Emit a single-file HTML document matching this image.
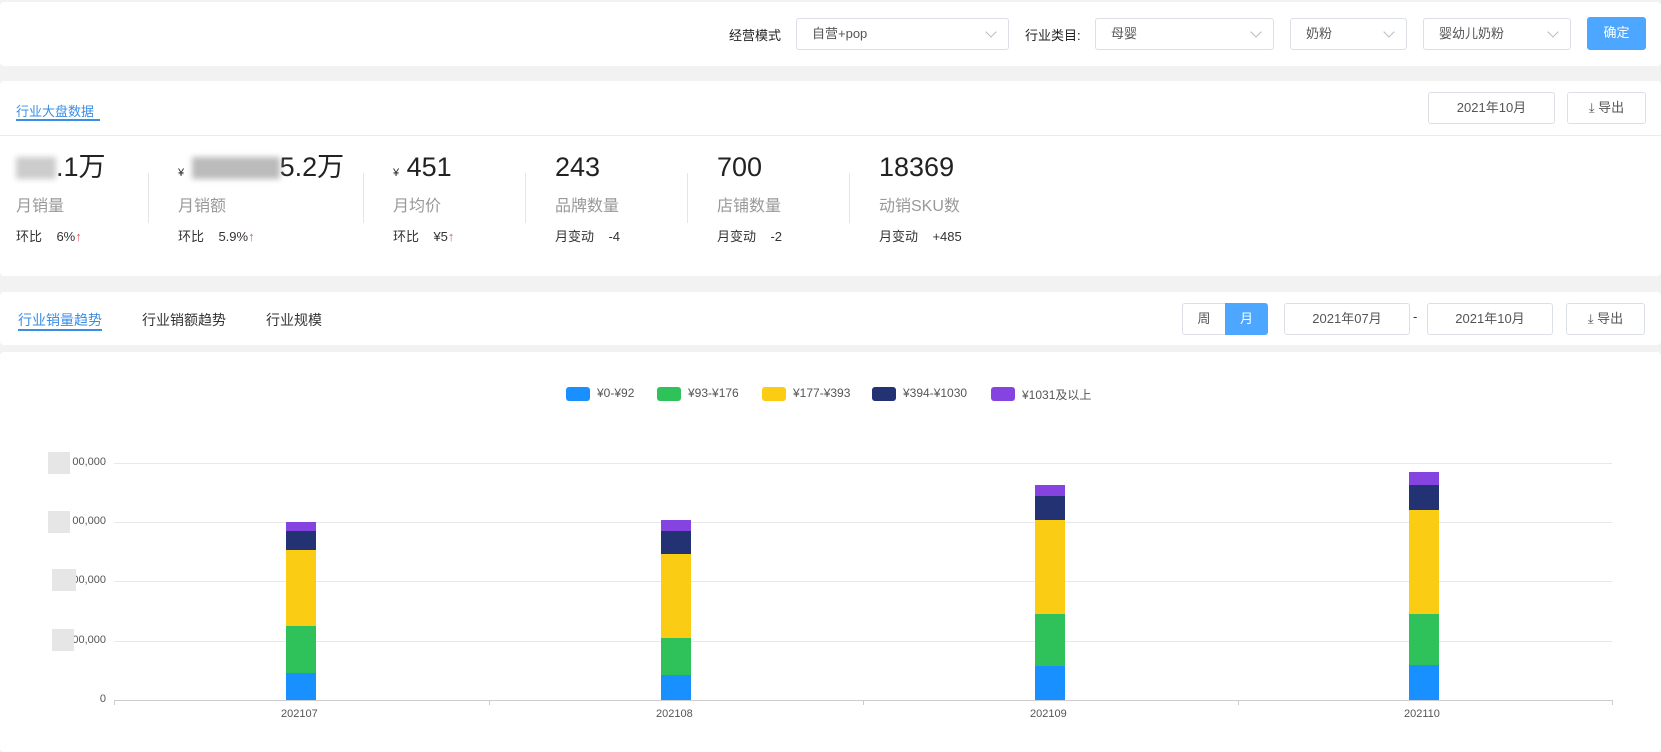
<!DOCTYPE html>
<html><head><meta charset="utf-8"><style>
*{margin:0;padding:0;box-sizing:border-box}
body{width:1661px;height:744px;background:#f2f2f2;font-family:"Liberation Sans","Noto Sans CJK SC",sans-serif;position:relative;overflow:hidden;color:#333}
.card{position:absolute;left:0;width:1661px;background:#fff;border-radius:4px}
.a{position:absolute;white-space:nowrap}
.sel{position:absolute;height:32px;border:1px solid #dcdfe6;border-radius:3px;font-size:13px;color:#555;line-height:30px;padding-left:15px;background:#fff}
.sel:after{content:"";position:absolute;right:13px;top:9px;width:7px;height:7px;border-right:1px solid #bbb;border-bottom:1px solid #bbb;transform:rotate(45deg)}
.btn{position:absolute;height:32px;border:1px solid #dcdfe6;border-radius:3px;font-size:13px;color:#555;line-height:30px;text-align:center;background:#fff}
.big{font-size:27px;color:#222;top:151px;line-height:32px}
.lab{font-size:16px;color:#999;top:192px}
.sub{font-size:13px;color:#333;top:226px}
.up{color:#e55}
.vd{position:absolute;width:1px;height:50px;background:#e5e5e5;top:173px}
.tab{font-size:14px;color:#333;top:310px}
.grid{position:absolute;left:114px;width:1498px;height:1px;background:#e8e8e8}
.yl{position:absolute;right:1555px;font-size:11px;color:#555}
.bar{position:absolute;width:30px}
.leg{position:absolute;top:387px;width:24px;height:14px;border-radius:3px}
.lt{position:absolute;top:386px;font-size:12px;color:#555}
.blur{display:inline-block;height:22px;background:#ccc;filter:blur(3px);vertical-align:-3px}
</style></head><body>
<div class="card" style="top:2px;height:64px"></div>
<div class="a" style="left:729px;top:25px;font-size:13px;color:#222">经营模式</div>
<div class="sel" style="left:796px;top:18px;width:213px">自营+pop</div>
<div class="a" style="left:1025px;top:25px;font-size:13px;color:#222">行业类目:</div>
<div class="sel" style="left:1095px;top:18px;width:179px">母婴</div>
<div class="sel" style="left:1290px;top:18px;width:117px">奶粉</div>
<div class="sel" style="left:1423px;top:18px;width:148px">婴幼儿奶粉</div>
<div class="btn" style="left:1587px;top:17px;width:59px;height:33px;background:#4da6ff;border-color:#4da6ff;color:#fff">确定</div>

<div class="card" style="top:81px;height:195px"></div>
<div class="a" style="left:16px;top:101px;font-size:13px;color:#3a8ee6">行业大盘数据</div>
<div class="a" style="left:16px;top:119px;width:84px;height:2px;background:#3a8ee6"></div>
<div class="a" style="left:0;top:135px;width:1661px;height:1px;background:#ebebeb"></div>
<div class="btn" style="left:1428px;top:92px;width:127px">2021年10月</div>
<div class="btn" style="left:1567px;top:92px;width:79px">⤓ 导出</div>

<div class="a big" style="left:16px"><span class="blur" style="width:40px"></span>.1万</div>
<div class="a big" style="left:178px"><span style="font-size:11px">¥</span> <span class="blur" style="width:88px;background:#bbb"></span>5.2万</div>
<div class="a big" style="left:393px"><span style="font-size:11px">¥</span> 451</div>
<div class="a big" style="left:555px">243</div>
<div class="a big" style="left:717px">700</div>
<div class="a big" style="left:879px">18369</div>
<div class="a lab" style="left:16px">月销量</div>
<div class="a lab" style="left:178px">月销额</div>
<div class="a lab" style="left:393px">月均价</div>
<div class="a lab" style="left:555px">品牌数量</div>
<div class="a lab" style="left:717px">店铺数量</div>
<div class="a lab" style="left:879px">动销SKU数</div>
<div class="a sub" style="left:16px">环比 &nbsp;&nbsp;&nbsp;6%<span class="up">↑</span></div>
<div class="a sub" style="left:178px">环比 &nbsp;&nbsp;&nbsp;5.9%<span class="up">↑</span></div>
<div class="a sub" style="left:393px">环比 &nbsp;&nbsp;&nbsp;¥5<span class="up">↑</span></div>
<div class="a sub" style="left:555px">月变动 &nbsp;&nbsp;&nbsp;-4</div>
<div class="a sub" style="left:717px">月变动 &nbsp;&nbsp;&nbsp;-2</div>
<div class="a sub" style="left:879px">月变动 &nbsp;&nbsp;&nbsp;+485</div>
<div class="vd" style="left:148px"></div><div class="vd" style="left:363px"></div><div class="vd" style="left:525px"></div><div class="vd" style="left:687px"></div><div class="vd" style="left:849px"></div>

<div class="card" style="top:292px;height:53px"></div>
<div class="a tab" style="left:18px;color:#3a8ee6">行业销量趋势</div>
<div class="a" style="left:18px;top:329px;width:84px;height:2px;background:#3a8ee6"></div>
<div class="a tab" style="left:142px">行业销额趋势</div>
<div class="a tab" style="left:266px">行业规模</div>
<div class="btn" style="left:1182px;top:303px;width:44px;border-radius:3px 0 0 3px">周</div>
<div class="btn" style="left:1225px;top:303px;width:43px;background:#4da6ff;border-color:#4da6ff;color:#fff;border-radius:0 3px 3px 0">月</div>
<div class="btn" style="left:1284px;top:303px;width:126px">2021年07月</div>
<div class="a" style="left:1413px;top:309px;font-size:13px">-</div>
<div class="btn" style="left:1427px;top:303px;width:126px">2021年10月</div>
<div class="btn" style="left:1566px;top:303px;width:79px">⤓ 导出</div>

<div class="card" style="top:352px;height:400px"></div>
<div class="leg" style="left:566px;background:#1890ff"></div><div class="lt" style="left:597px">¥0-¥92</div>
<div class="leg" style="left:657px;background:#2fc25b"></div><div class="lt" style="left:688px">¥93-¥176</div>
<div class="leg" style="left:762px;background:#facc14"></div><div class="lt" style="left:793px">¥177-¥393</div>
<div class="leg" style="left:872px;background:#223273"></div><div class="lt" style="left:903px">¥394-¥1030</div>
<div class="leg" style="left:991px;background:#8543e0"></div><div class="lt" style="left:1022px">¥1031及以上</div>

<div class="grid" style="top:463px"></div><div class="grid" style="top:522px"></div><div class="grid" style="top:581px"></div><div class="grid" style="top:641px"></div>
<div class="grid" style="top:700px;background:#ccc"></div>
<div class="a" style="left:114px;top:700px;width:1px;height:5px;background:#ccc"></div>
<div class="a" style="left:489px;top:700px;width:1px;height:5px;background:#ccc"></div>
<div class="a" style="left:863px;top:700px;width:1px;height:5px;background:#ccc"></div>
<div class="a" style="left:1238px;top:700px;width:1px;height:5px;background:#ccc"></div>
<div class="a" style="left:1612px;top:700px;width:1px;height:5px;background:#ccc"></div>
<div class="yl" style="top:456px">00,000</div><div class="yl" style="top:515px">00,000</div><div class="yl" style="top:574px">00,000</div><div class="yl" style="top:634px">00,000</div><div class="yl" style="top:693px">0</div>
<div class="a" style="left:48px;top:452px;width:22px;height:22px;background:#e6e6e6"></div>
<div class="a" style="left:48px;top:511px;width:22px;height:22px;background:#e6e6e6"></div>
<div class="a" style="left:52px;top:569px;width:24px;height:22px;background:#e6e6e6"></div>
<div class="a" style="left:52px;top:629px;width:22px;height:22px;background:#e6e6e6"></div>

<div class="bar" style="left:286px;top:522px;height:9px;background:#8543e0"></div>
<div class="bar" style="left:286px;top:531px;height:19px;background:#223273"></div>
<div class="bar" style="left:286px;top:550px;height:76px;background:#facc14"></div>
<div class="bar" style="left:286px;top:626px;height:47px;background:#2fc25b"></div>
<div class="bar" style="left:286px;top:673px;height:27px;background:#1890ff"></div>

<div class="bar" style="left:661px;top:520px;height:11px;background:#8543e0"></div>
<div class="bar" style="left:661px;top:531px;height:23px;background:#223273"></div>
<div class="bar" style="left:661px;top:554px;height:84px;background:#facc14"></div>
<div class="bar" style="left:661px;top:638px;height:37px;background:#2fc25b"></div>
<div class="bar" style="left:661px;top:675px;height:25px;background:#1890ff"></div>

<div class="bar" style="left:1035px;top:485px;height:11px;background:#8543e0"></div>
<div class="bar" style="left:1035px;top:496px;height:24px;background:#223273"></div>
<div class="bar" style="left:1035px;top:520px;height:94px;background:#facc14"></div>
<div class="bar" style="left:1035px;top:614px;height:52px;background:#2fc25b"></div>
<div class="bar" style="left:1035px;top:666px;height:34px;background:#1890ff"></div>

<div class="bar" style="left:1409px;top:472px;height:13px;background:#8543e0"></div>
<div class="bar" style="left:1409px;top:485px;height:25px;background:#223273"></div>
<div class="bar" style="left:1409px;top:510px;height:104px;background:#facc14"></div>
<div class="bar" style="left:1409px;top:614px;height:51px;background:#2fc25b"></div>
<div class="bar" style="left:1409px;top:665px;height:35px;background:#1890ff"></div>

<div class="a" style="left:281px;top:708px;font-size:11px;color:#555">202107</div>
<div class="a" style="left:656px;top:708px;font-size:11px;color:#555">202108</div>
<div class="a" style="left:1030px;top:708px;font-size:11px;color:#555">202109</div>
<div class="a" style="left:1404px;top:708px;font-size:11px;color:#555">202110</div>
</body></html>
